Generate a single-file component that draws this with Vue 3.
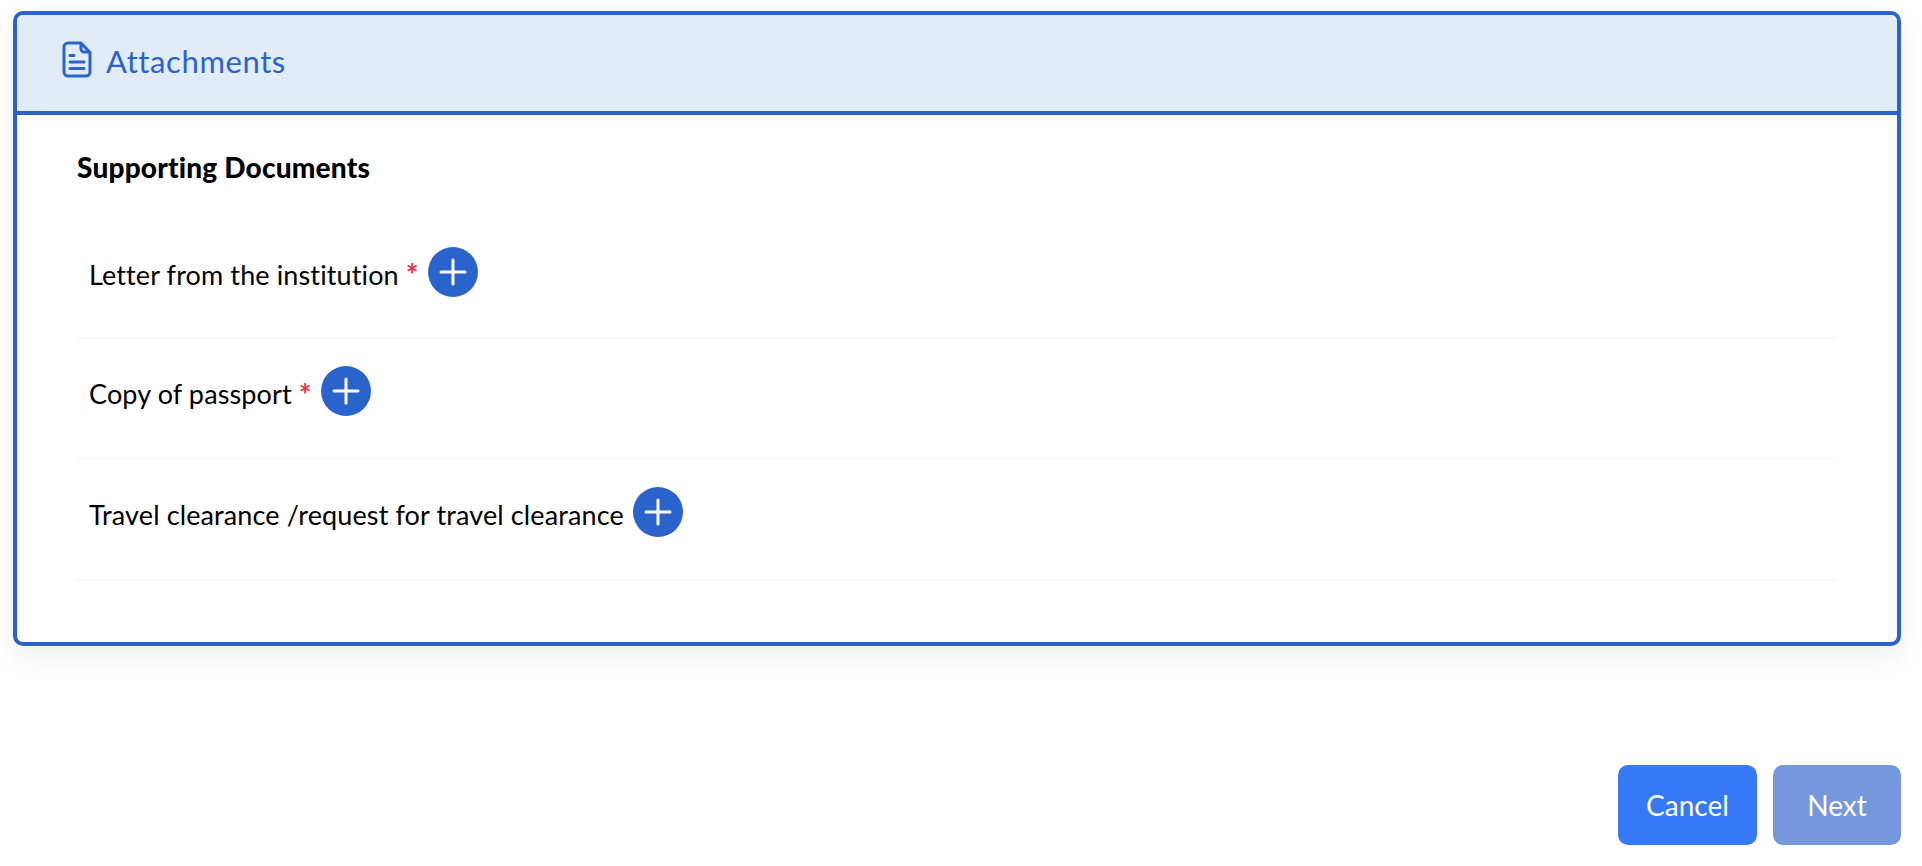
<template>
  <div class="page">
    <section class="card">
      <header class="card-head">
        <svg class="doc-icon" viewBox="0 0 30 37" fill="none">
          <path d="M6 2h13l9 9.500V31a4 4 0 0 1-4 4H6a4 4 0 0 1-4-4V6a4 4 0 0 1 4-4z" stroke="#2b63cc" stroke-width="3" stroke-linejoin="round" />
          <path d="M19 2.500V8a3 3 0 0 0 3 3h5.500" stroke="#2b63cc" stroke-width="3" stroke-linejoin="round" />
          <path d="M8 14.500h4M8 21h14M8 27.500h14" stroke="#2b63cc" stroke-width="3" stroke-linecap="round" />
        </svg>
        <span class="head-title">Attachments</span>
      </header>

      <div class="card-body">
        <h3>Supporting Documents</h3>
        <div v-for="doc in docs" :key="doc.label" class="doc-row">
          <span class="doc-label">{{ doc.label }}</span>
          <span v-if="doc.required" class="req">*</span>
          <button class="add-btn" aria-label="Add">
            <svg viewBox="0 0 50 50" width="50" height="50">
              <path d="M25 13v24M13 25h24" stroke="#fff" stroke-width="3" stroke-linecap="round" />
            </svg>
          </button>
        </div>
      </div>
    </section>

    <div class="actions">
      <button class="btn cancel">Cancel</button>
      <button class="btn next">Next</button>
    </div>
  </div>
</template>

<script setup>
const docs = [
  { label: 'Letter from the institution', required: true },
  { label: 'Copy of passport', required: true },
  { label: 'Travel clearance /request for travel clearance', required: false }
]
</script>

<style>
body {
  margin: 0;
  background: #fff;
}
</style>

<style scoped>
* {
  box-sizing: border-box;
}

.page {
  height: 866px;
  padding: 11px 21px 21px 13px;
  display: flex;
  flex-direction: column;
  font-family: Lato, "Open Sans", sans-serif;
  overflow: hidden;
}

.card {
  height: 635px;
  border: 4px solid #2b63cc;
  border-radius: 10px;
  box-shadow: 0 10px 30px rgba(0, 0, 0, .07);
  overflow: hidden;
  background: #fff;
}

.card-head {
  height: 100px;
  background: #e2ecf7;
  border-bottom: 4px solid #2b63cc;
  display: flex;
  align-items: center;
  gap: 14px;
  padding: 0 0 4px 45px;
  color: #2b63cc;
}

.doc-icon {
  width: 30px;
  height: 37px;
  margin-top: -4px;
}

.head-title {
  font-size: 31px;
  letter-spacing: .6px;
}

.card-body {
  padding: 34px 60px 0;
}

h3 {
  margin: 0 0 36px;
  font-size: 28px;
  line-height: 36px;
  font-weight: 900;
  color: #000;
  letter-spacing: .2px;
}

.doc-row {
  height: 121px;
  display: flex;
  align-items: center;
  padding: 0 0 10px 12px;
  border-bottom: 2px solid #f8f8f8;
  font-size: 27px;
  letter-spacing: .12px;
  color: #000;
}

.doc-row:first-of-type {
  height: 118px;
}

.req {
  margin-left: 7px;
  color: #ee3350;
  font-size: 30px;
  font-weight: 700;
}

.add-btn {
  width: 50px;
  height: 50px;
  margin: -5px 0 0 9px;
  padding: 0;
  border: 0;
  border-radius: 50%;
  background: #2b63cc;
}

.add-btn svg {
  display: block;
}

.actions {
  margin-top: auto;
  display: flex;
  justify-content: flex-end;
  gap: 16px;
}

.btn {
  height: 80px;
  border: 0;
  border-radius: 10px;
  color: #fff;
  font-family: inherit;
  font-size: 28px;
}

.cancel {
  width: 139px;
  background: #377af8;
}

.next {
  width: 128px;
  background: #7598dd;
}
</style>
